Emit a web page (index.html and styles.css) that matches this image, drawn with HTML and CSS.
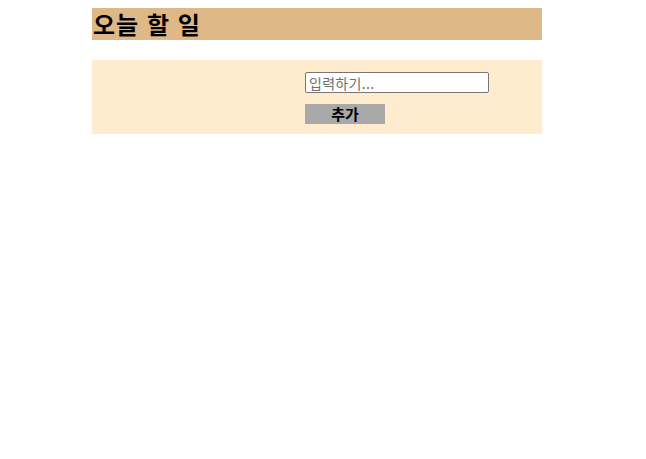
FILE: index.html
```html
<!DOCTYPE html>
<html lang="ko">
<head>
    <meta charset="UTF-8">
    <title>오늘 할 일</title>
    <link rel="stylesheet" href="styles.css">
</head>
<body>
    <div class="todo-app">
        <h1 class="todo-title">오늘 할 일</h1>
        <form class="todo-form">
            <input type="text" class="todo-input" placeholder="입력하기...">
            <button type="button" class="todo-add">추가</button>
        </form>
        <ul class="todo-list"></ul>
    </div>
</body>
</html>
```

FILE: styles.css
```css
body {
    margin: 8px;
    font-family: "Noto Sans CJK KR", "Noto Sans", sans-serif;
    background: #fff;
}

.todo-app {
    width: 450px;
    margin-left: 84px;
}

.todo-title {
    margin: 0;
    height: 32px;
    line-height: 32px;
    font-size: 24px;
    font-weight: 700;
    letter-spacing: 1px;
    padding-left: 1px;
    background: #deb887;
    color: #000;
}

.todo-form {
    margin-top: 20px;
    background: #ffebcd;
    padding: 12px 0 10px 213px;
    display: flex;
    flex-direction: column;
    align-items: flex-start;
    gap: 11px;
}

.todo-input {
    box-sizing: border-box;
    width: 184px;
    height: 21px;
    margin: 0;
    padding: 0 3px;
    border: 1px solid #767676;
    border-radius: 2px;
    font-family: inherit;
    font-size: 14px;
    letter-spacing: 0.3px;
}

.todo-input::placeholder {
    color: #6f6f6f;
}

.todo-add {
    width: 80px;
    height: 20px;
    margin: 0;
    padding: 0;
    border: none;
    background: #a9a9a9;
    font-family: inherit;
    font-size: 15px;
    font-weight: 700;
    line-height: 20px;
    color: #000;
}

.todo-list {
    margin: 0;
    padding: 0;
    list-style: none;
}
```
